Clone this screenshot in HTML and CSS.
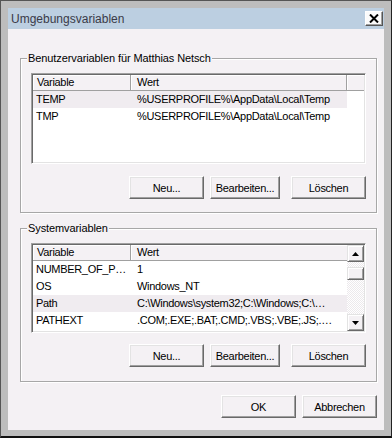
FILE: index.html
```html
<!DOCTYPE html>
<html>
  <head>
    <title>Umgebungsvariablen</title>
    <meta charset="UTF-8">
    <meta name="viewport" content="width=device-width, initial-scale=1.0">
    <link rel="stylesheet" href="styles.css">
  </head>
  <body>
    <div class="window">
      <div class="titlebar">
        <span class="title">Umgebungsvariablen</span>
        <span class="close">
          <svg width="10" height="9" viewBox="0 0 10 9"><path d="M1 0.5 L9 8.5 M9 0.5 L1 8.5" stroke="#000" stroke-width="2"/></svg>
        </span>
      </div>

      <div class="client">
        <!-- Benutzervariablen -->
        <div class="group">
          <span class="group-title">Benutzervariablen für Matthias Netsch</span>
          <div class="list user-list">
            <div class="list-main">
              <div class="list-head">
                <span class="col-name">Variable</span>
                <span class="col-value">Wert</span>
                <span class="col-rest"></span>
              </div>
              <div class="row selected"><span class="col-name">TEMP</span><span class="col-value">%USERPROFILE%\AppData\Local\Temp</span></div>
              <div class="row"><span class="col-name">TMP</span><span class="col-value">%USERPROFILE%\AppData\Local\Temp</span></div>
            </div>
          </div>
          <div class="btn-row">
            <button>Neu...</button>
            <button class="btn-edit">Bearbeiten...</button>
            <button class="btn-delete">Löschen</button>
          </div>
        </div>

        <!-- Systemvariablen -->
        <div class="group system">
          <span class="group-title">Systemvariablen</span>
          <div class="list sys-list">
            <div class="list-main">
              <div class="list-head">
                <span class="col-name">Variable</span>
                <span class="col-value grow">Wert</span>
              </div>
              <div class="row"><span class="col-name">NUMBER_OF_P…</span><span class="col-value">1</span></div>
              <div class="row"><span class="col-name">OS</span><span class="col-value">Windows_NT</span></div>
              <div class="row selected"><span class="col-name">Path</span><span class="col-value">C:\Windows\system32;C:\Windows;C:\…</span></div>
              <div class="row"><span class="col-name">PATHEXT</span><span class="col-value">.COM;.EXE;.BAT;.CMD;.VBS;.VBE;.JS;.…</span></div>
            </div>
            <div class="scrollbar">
              <div class="sb-btn">
                <svg width="7" height="4" viewBox="0 0 7 4"><polygon points="3.5,0 7,4 0,4" fill="#000"/></svg>
              </div>
              <div class="sb-track">
                <div class="sb-thumb"></div>
              </div>
              <div class="sb-btn">
                <svg width="7" height="4" viewBox="0 0 7 4"><polygon points="0,0 7,0 3.5,4" fill="#000"/></svg>
              </div>
            </div>
          </div>
          <div class="btn-row">
            <button>Neu...</button>
            <button class="btn-edit">Bearbeiten...</button>
            <button class="btn-delete">Löschen</button>
          </div>
        </div>

        <div class="footer">
          <button>OK</button>
          <button>Abbrechen</button>
        </div>
      </div>
    </div>
  </body>
</html>
```

FILE: styles.css
```css
body {
    margin: 0;
    font-family: "Liberation Sans", Arial, sans-serif;
    font-size: 11px;
    color: #000;
}
.window {
    width: 392px;
    height: 438px;
    box-sizing: border-box;
    display: flex;
    flex-direction: column;
    background-color: #bdbdbd;
    border: 1px solid #555;
    border-right-color: #222;
    border-bottom: 2px solid #111;
    padding: 7px 7px 6px 7px;
}
.titlebar {
    height: 21px;
    display: flex;
    align-items: center;
    justify-content: space-between;
    background-color: #bccfe1;
    padding-left: 3px;
}
.title {
    font-size: 12px;
    color: #3a3a48;
}
.close {
    width: 18px;
    height: 15px;
    box-sizing: border-box;
    margin-right: 1px;
    display: flex;
    align-items: center;
    justify-content: center;
    background-color: #fbfbfb;
    border: 1px solid;
    border-color: #fff #555 #555 #fff;
    box-shadow: inset -1px -1px #a0a0a0;
}
.client {
    flex: 1;
    display: flex;
    flex-direction: column;
    background-color: #f4f1f4;
    padding: 29px 7px 12px 12px;
}
.group {
    display: flex;
    flex-direction: column;
    border: 1px solid #a7a7a7;
    box-shadow: inset 1px 1px #fff, 1px 1px #fff;
    padding: 0 10px 13px 10px;
}
.group.system {
    margin-top: 15px;
    padding-bottom: 14px;
}
.group-title {
    align-self: flex-start;
    margin: -8px 0 0 -4px;
    padding: 0 1px;
    line-height: 14px;
    height: 14px;
    background-color: #f4f1f4;
    letter-spacing: -0.1px;
}
.list {
    margin-top: 8px;
    height: 91px;
    box-sizing: border-box;
    display: flex;
    background-color: #fff;
    border: 1px solid;
    border-color: #a0a0a0 #fff #fff #a0a0a0;
    box-shadow: inset 1px 1px #696969, inset -1px -1px #e3e3e3;
    padding: 1px;
    letter-spacing: -0.3px;
}
.sys-list {
    height: 90px;
}
.list-main {
    flex: 1;
    display: flex;
    flex-direction: column;
    overflow: hidden;
}
.list-head {
    display: flex;
    height: 16px;
    flex-shrink: 0;
}
.list-head span {
    box-sizing: border-box;
    height: 16px;
    line-height: 15px;
    background-color: #f4f1f4;
    border-right: 1px solid #a0a0a0;
    border-bottom: 1px solid #a0a0a0;
    box-shadow: inset 1px 1px #fff;
}
.list-head .col-name {
    padding-left: 4px;
}
.list-head .col-rest {
    flex: 1;
    border-right: none;
}
.list-head .grow {
    flex: 1;
    border-right: none;
}
.col-name {
    width: 98px;
    flex-shrink: 0;
    box-sizing: border-box;
    padding-left: 3px;
    white-space: nowrap;
    overflow: hidden;
}
.col-value {
    width: 216px;
    flex-shrink: 0;
    box-sizing: border-box;
    padding-left: 6px;
    white-space: nowrap;
    overflow: hidden;
}
.row {
    display: flex;
    height: 17px;
    line-height: 17px;
    align-self: flex-start;
}
.row.selected {
    background-color: #f0ecf0;
}
.scrollbar {
    width: 17px;
    display: flex;
    flex-direction: column;
}
.sb-btn {
    height: 17px;
    box-sizing: border-box;
    display: flex;
    align-items: center;
    justify-content: center;
    background-color: #f4f1f4;
    border: 1px solid;
    border-color: #e3e3e3 #696969 #696969 #e3e3e3;
    box-shadow: inset 1px 1px #fff, inset -1px -1px #a0a0a0;
}
.sb-track {
    flex: 1;
    padding-top: 5px;
    background-color: #fff;
    background-image: repeating-conic-gradient(#ece9ec 0 25%, #fff 0 50%);
    background-size: 2px 2px;
}
.sb-thumb {
    height: 13px;
    box-sizing: border-box;
    background-color: #f4f1f4;
    border: 1px solid;
    border-color: #e3e3e3 #696969 #696969 #e3e3e3;
    box-shadow: inset 1px 1px #fff, inset -1px -1px #a0a0a0;
}
.btn-row {
    display: flex;
    justify-content: flex-end;
    margin-top: 12px;
}
.system .btn-row {
    margin-top: 11px;
}
button {
    width: 75px;
    height: 23px;
    box-sizing: border-box;
    margin: 0;
    padding: 0;
    font-family: "Liberation Sans", Arial, sans-serif;
    font-size: 11px;
    letter-spacing: -0.3px;
    color: #000;
    background-color: #f4f1f4;
    border: 1px solid;
    border-color: #fff #696969 #696969 #fff;
    box-shadow: inset -1px -1px #a0a0a0, inset 1px 1px #e3e3e3;
}
.btn-edit {
    width: 70px;
    margin-left: 6px;
}
.btn-delete {
    margin-left: 11px;
}
.footer {
    display: flex;
    justify-content: flex-end;
    gap: 6px;
    margin-top: 13px;
}
```
